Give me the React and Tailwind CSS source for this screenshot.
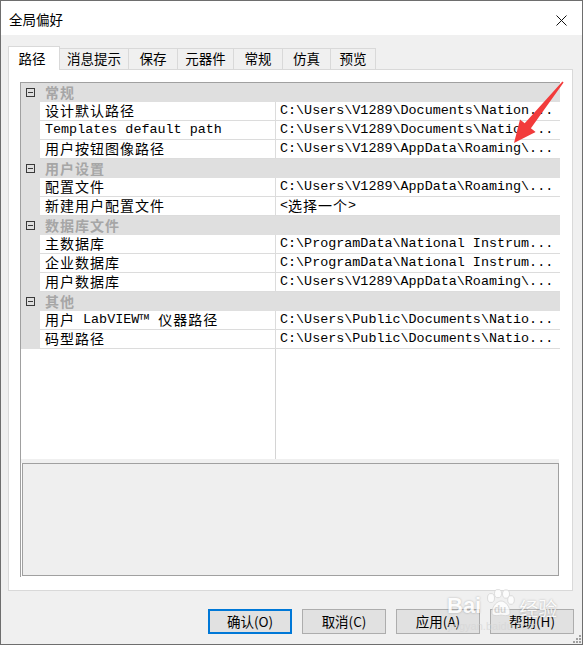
import React from 'react';

const groups = [
  {
    title: '常规',
    rows: [
      ['设计默认路径', 'C:\\Users\\V1289\\Documents\\Nation...'],
      ['Templates default path', 'C:\\Users\\V1289\\Documents\\Nation...'],
      ['用户按钮图像路径', 'C:\\Users\\V1289\\AppData\\Roaming\\...'],
    ],
  },
  {
    title: '用户设置',
    rows: [
      ['配置文件', 'C:\\Users\\V1289\\AppData\\Roaming\\...'],
      ['新建用户配置文件', '<选择一个>'],
    ],
  },
  {
    title: '数据库文件',
    rows: [
      ['主数据库', 'C:\\ProgramData\\National Instrum...'],
      ['企业数据库', 'C:\\ProgramData\\National Instrum...'],
      ['用户数据库', 'C:\\Users\\V1289\\AppData\\Roaming\\...'],
    ],
  },
  {
    title: '其他',
    rows: [
      ['用户 LabVIEW™ 仪器路径', 'C:\\Users\\Public\\Documents\\Natio...'],
      ['码型路径', 'C:\\Users\\Public\\Documents\\Natio...'],
    ],
  },
];

const tabs = ['路径', '消息提示', '保存', '元器件', '常规', '仿真', '预览'];
const tabWidths = ['w-[52px]', 'w-[70px]', 'w-[50px]', 'w-[57px]', 'w-[50px]', 'w-[49px]', 'w-[46px]'];

// latin runs in a mono face, CJK runs a bit wider, like SimSun in the property grid
function Mixed({ text }) {
  const parts = text.split(/([\x20-\x7E]+)/).filter(Boolean);
  return parts.map((p, i) =>
    /^[\x20-\x7E]+$/.test(p) ? (
      <span key={i} className="font-['Liberation_Mono',monospace] text-[13.4px] leading-none whitespace-pre">
        {p}
      </span>
    ) : (
      <span key={i} className="relative -top-[1px] font-['Noto_Sans_CJK_SC',sans-serif] text-[14px] leading-none tracking-[1px]">
        {p}
      </span>
    )
  );
}

function CategoryRow({ title }) {
  return (
    <div className="flex items-center h-[19px] bg-[#dfdfdf]">
      <div className="w-[19px] pl-[5px] flex items-center">
        <div className="w-[9px] h-[9px] border border-[#3a3a3a] flex items-center justify-center">
          <div className="w-[5px] h-px bg-[#3a3a3a]" />
        </div>
      </div>
      <span className="relative -top-[1px] pl-[5px] text-[14px] tracking-[1px] font-bold text-[#a6a6a6] leading-none">
        {title}
      </span>
    </div>
  );
}

function PropRow({ name, value }) {
  return (
    <div className="flex h-[19px]">
      <div className="w-[19px] bg-[#dfdfdf]" />
      <div className="w-[236px] pl-[5px] flex items-center border-r border-b border-[#dcdcdc] whitespace-nowrap">
        <Mixed text={name} />
      </div>
      <div className="flex-1 pl-[4px] flex items-center border-b border-[#dcdcdc] whitespace-nowrap">
        <Mixed text={value} />
      </div>
    </div>
  );
}

function Button({ label, primary }) {
  return (
    <div
      className={
        primary
          ? 'w-[84px] h-[25px] bg-[#e1e1e1] border-2 border-[#0078d7] flex items-center justify-center text-[13.5px] leading-none'
          : 'w-[84px] h-[25px] bg-[#e1e1e1] border border-[#adadad] flex items-center justify-center text-[13.5px] leading-none'
      }
    >
      {label}
    </div>
  );
}

export default function App() {
  return (
    <div className="relative w-[583px] h-[645px] bg-[#f0f0f0] border border-[#6e6e6e] flex flex-col overflow-hidden font-['Noto_Sans_CJK_SC',sans-serif] text-black">
      <div className="h-[34px] shrink-0 bg-white flex items-center justify-between">
        <span className="pl-[8px] pt-[4px] text-[13.5px] leading-none">全局偏好</span>
        <div className="w-[42px] h-full pt-[4px] flex items-center justify-center">
          <svg width="11" height="11" viewBox="0 0 11 11">
            <path d="M0.5 0.5 L10.5 10.5 M10.5 0.5 L0.5 10.5" stroke="#111" strokeWidth="1" />
          </svg>
        </div>
      </div>

      <div className="pl-[7px] pr-[9px] pt-[11px]">
        <div className="relative z-10 flex items-end h-[23px]">
          {tabs.map((t, i) =>
            i === 0 ? (
              <div
                key={t}
                className="w-[52px] h-[24px] -mb-px pr-[4px] bg-white border border-b-0 border-[#d9d9d9] flex items-center justify-center text-[13.5px] leading-none"
              >
                {t}
              </div>
            ) : (
              <div
                key={t}
                className={`${tabWidths[i]} h-[21px] -ml-px bg-[#f0f0f0] border border-b-0 border-[#d9d9d9] flex items-center justify-center text-[13.5px] leading-none`}
              >
                {t}
              </div>
            )
          )}
        </div>

        <div className="h-[522px] bg-white border border-[#d9d9d9] pt-[12px] pl-[11px]">
          <div className="w-[540px] h-[495px] flex flex-col border-l border-t border-[#a0a0a0] pb-px">
            <div className="flex-1 flex flex-col">
              {groups.map((g) => (
                <React.Fragment key={g.title}>
                  <CategoryRow title={g.title} />
                  {g.rows.map(([n, v]) => (
                    <PropRow key={n} name={n} value={v} />
                  ))}
                </React.Fragment>
              ))}
              <div className="flex-1 flex">
                <div className="w-[19px]" />
                <div className="w-[236px] border-r border-[#d4d4d4]" />
                <div className="flex-1" />
              </div>
            </div>
            <div className="h-[4px] mr-px bg-[#f0f0f0]" />
            <div className="h-[113px] ml-px mr-px bg-[#efefef] border border-[#a0a0a0]" />
          </div>
        </div>
      </div>

      <div className="flex justify-end gap-[10px] pt-[18px] pr-[8px]">
        <Button label="确认(O)" primary />
        <Button label="取消(C)" />
        <Button label="应用(A)" />
        <Button label="帮助(H)" />
      </div>

      {/* red annotation arrow */}
      <svg className="absolute left-0 top-0 pointer-events-none" width="583" height="645">
        <polygon
          points="562.6,81.5 529.9,127.3 534.6,131.1 513,142 519,118.5 523.7,122.3 561.4,80.5"
          fill="#f23b3b"
        />
      </svg>

      {/* baidu watermark */}
      <div className="absolute left-[446px] top-[588px] flex items-end gap-[2px] opacity-80 pointer-events-none">
        <span className="font-['Liberation_Sans',sans-serif] font-bold text-[22px] leading-none text-white [text-shadow:0_0_2px_rgba(0,0,0,0.35)]">
          Bai
        </span>
        <svg width="34" height="28" viewBox="0 0 34 28">
          <g fill="#ffffff" stroke="#cfcfcf" strokeWidth="0.8">
            <ellipse cx="8" cy="9" rx="3.5" ry="4.5" />
            <ellipse cx="15" cy="4.5" rx="3.5" ry="4.2" />
            <ellipse cx="23" cy="5" rx="3.5" ry="4.2" />
            <ellipse cx="28" cy="11" rx="3.3" ry="4.3" />
            <path d="M9 24 C9 16 15 12 18 12 C22 12 27 17 27 24 C27 27 22 27 18 26 C14 27 9 27 9 24 Z" />
          </g>
          <text x="11" y="24" fontSize="10" fontWeight="bold" fill="#d0d0d0" fontFamily="Liberation Sans">du</text>
        </svg>
        <span className="text-[19px] leading-none text-white [text-shadow:0_0_2px_rgba(0,0,0,0.35)]">经验</span>
      </div>
      <div className="absolute left-[447px] top-[620px] text-[11px] leading-none font-['Liberation_Sans',sans-serif] text-[#d6d6d6] opacity-70 pointer-events-none">
        jingyan.baidu.com
      </div>

      {/* size grip */}
      <svg className="absolute right-[1px] bottom-[1px]" width="9" height="9" viewBox="0 0 9 9">
        <g fill="#a0a0a0">
          <rect x="7" y="1" width="2" height="2" />
          <rect x="4" y="4" width="2" height="2" />
          <rect x="7" y="4" width="2" height="2" />
          <rect x="1" y="7" width="2" height="2" />
          <rect x="4" y="7" width="2" height="2" />
          <rect x="7" y="7" width="2" height="2" />
        </g>
      </svg>
    </div>
  );
}
